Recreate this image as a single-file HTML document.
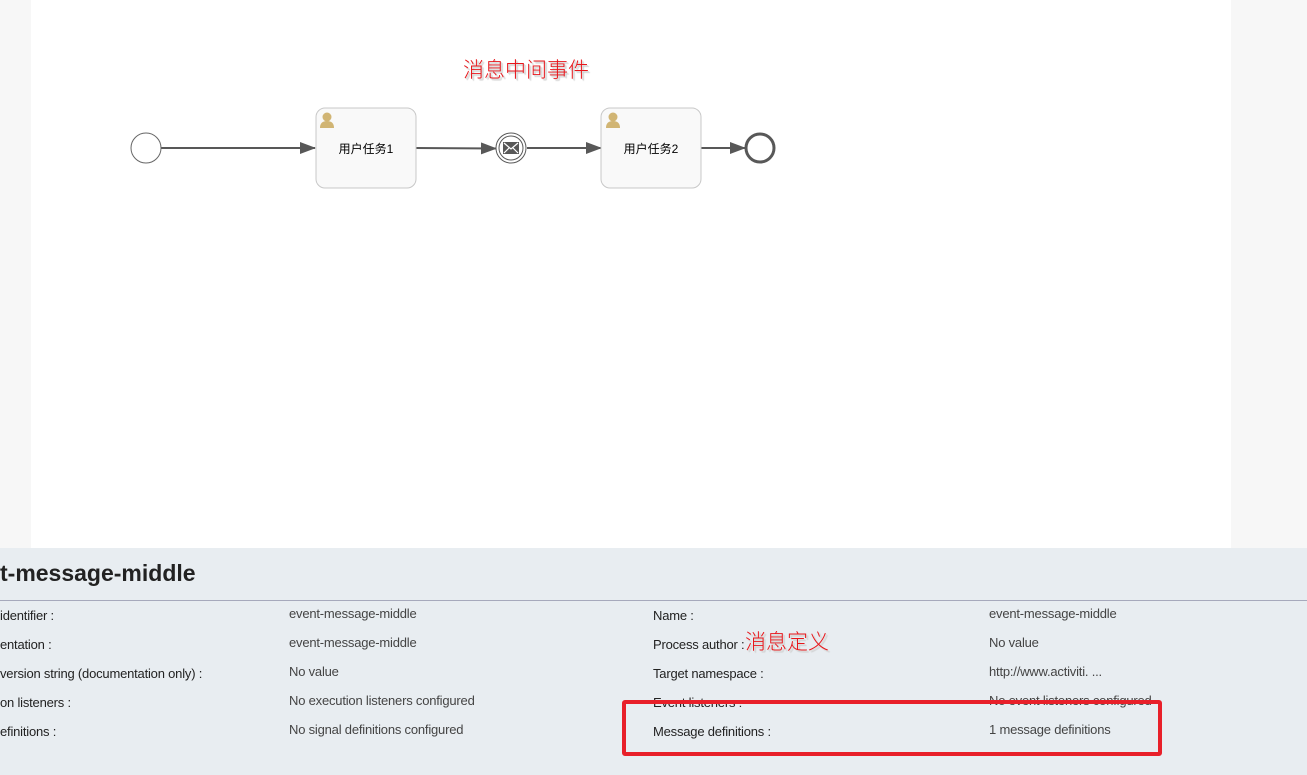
<!DOCTYPE html>
<html><head><meta charset="utf-8"><style>
body{margin:0;width:1307px;height:775px;background:#f7f7f7;position:relative;overflow:hidden;font-family:"Liberation Sans","Noto Sans CJK SC",sans-serif;}
.canvas{position:absolute;left:31px;top:0;width:1200px;height:548px;background:#fff;}
.panel{position:absolute;left:0;top:548px;width:1307px;height:227px;background:#e8edf1;}
.t{position:absolute;font-size:13px;color:#222;white-space:nowrap;line-height:16px;letter-spacing:-0.2px;}
.v{color:#444;}
h1{position:absolute;left:0;top:559px;margin:0;font-size:23px;font-weight:600;color:#222;line-height:28px;}
.line{position:absolute;left:0;top:600px;width:1307px;height:1px;background:#a6a9bc;}
.red{position:absolute;font-size:21px;font-weight:300;color:#e8161b;text-shadow:1px 1px 0 #ddd,2px 2px 1px #ccc;font-family:"Noto Sans CJK SC",sans-serif;line-height:24px;}
</style></head><body>
<div class="canvas"></div>
<svg style="position:absolute;left:0;top:0" width="1307" height="548">
<defs><marker id="a" markerWidth="16" markerHeight="12" refX="15" refY="6" orient="auto" markerUnits="userSpaceOnUse"><path d="M0,0 L16,6 L0,12 z" fill="#585858"/></marker></defs>
<g stroke="#585858" stroke-width="2" fill="none">
<line x1="161" y1="148" x2="315" y2="148" marker-end="url(#a)"/>
<line x1="416" y1="148" x2="496" y2="148.5" marker-end="url(#a)"/>
<line x1="527" y1="148" x2="601" y2="148" marker-end="url(#a)"/>
<line x1="701" y1="148" x2="745" y2="148" marker-end="url(#a)"/>
</g>
<circle cx="146" cy="148" r="15" fill="#fff" stroke="#666" stroke-width="1"/>
<circle cx="760" cy="148" r="14" fill="#fff" stroke="#585858" stroke-width="3"/>
<circle cx="511" cy="148" r="15" fill="#fff" stroke="#585858" stroke-width="1"/>
<circle cx="511" cy="148" r="12" fill="#fff" stroke="#585858" stroke-width="1"/>
<rect x="503" y="142" width="16" height="12" fill="#585858"/>
<path d="M504,143 L511,149 L518,143 M504,153 L509,148 M518,153 L513,148" stroke="#fff" stroke-width="1.2" fill="none"/>
<rect x="316" y="108" width="100" height="80" rx="9" fill="#f9f9f9" stroke="#c8c8c8"/>
<rect x="601" y="108" width="100" height="80" rx="9" fill="#f9f9f9" stroke="#c8c8c8"/>
<g fill="#d1b574">
<circle cx="327" cy="117" r="4.5"/><path d="M320,128 Q320,121 327,121 Q334,121 334,128 z"/>
<circle cx="613" cy="117" r="4.5"/><path d="M606,128 Q606,121 613,121 Q620,121 620,128 z"/>
</g>
<text x="366" y="153" font-size="12" text-anchor="middle" font-family="Liberation Sans,Noto Sans CJK SC,sans-serif" fill="#000">用户任务1</text>
<text x="651" y="153" font-size="12" text-anchor="middle" font-family="Liberation Sans,Noto Sans CJK SC,sans-serif" fill="#000">用户任务2</text>
</svg>
<div class="red" style="left:463px;top:57px;">消息中间事件</div>
<div class="panel"></div>
<h1>t-message-middle</h1>
<div class="line"></div>
<div class="t" style="left:0;top:608px">identifier :</div>
<div class="t" style="left:0;top:637px">entation :</div>
<div class="t" style="left:0;top:666px">version string (documentation only) :</div>
<div class="t" style="left:0;top:695px">on listeners :</div>
<div class="t" style="left:0;top:724px">efinitions :</div>
<div class="t v" style="left:289px;top:606px">event-message-middle</div>
<div class="t v" style="left:289px;top:635px">event-message-middle</div>
<div class="t v" style="left:289px;top:664px">No value</div>
<div class="t v" style="left:289px;top:693px">No execution listeners configured</div>
<div class="t v" style="left:289px;top:722px">No signal definitions configured</div>
<div class="t" style="left:653px;top:608px">Name :</div>
<div class="t" style="left:653px;top:637px">Process author :</div>
<div class="t" style="left:653px;top:666px">Target namespace :</div>
<div class="t" style="left:653px;top:695px">Event listeners :</div>
<div class="t" style="left:653px;top:724px">Message definitions :</div>
<div class="t v" style="left:989px;top:606px">event-message-middle</div>
<div class="t v" style="left:989px;top:635px">No value</div>
<div class="t v" style="left:989px;top:664px">http://www.activiti. ...</div>
<div class="t v" style="left:989px;top:693px">No event listeners configured</div>
<div class="t v" style="left:989px;top:722px">1 message definitions</div>
<div class="red" style="left:745px;top:629px;">消息定义</div>
<div style="position:absolute;left:622px;top:700px;width:532px;height:48px;border:4px solid #e8202a;border-radius:3px;"></div>
</body></html>
